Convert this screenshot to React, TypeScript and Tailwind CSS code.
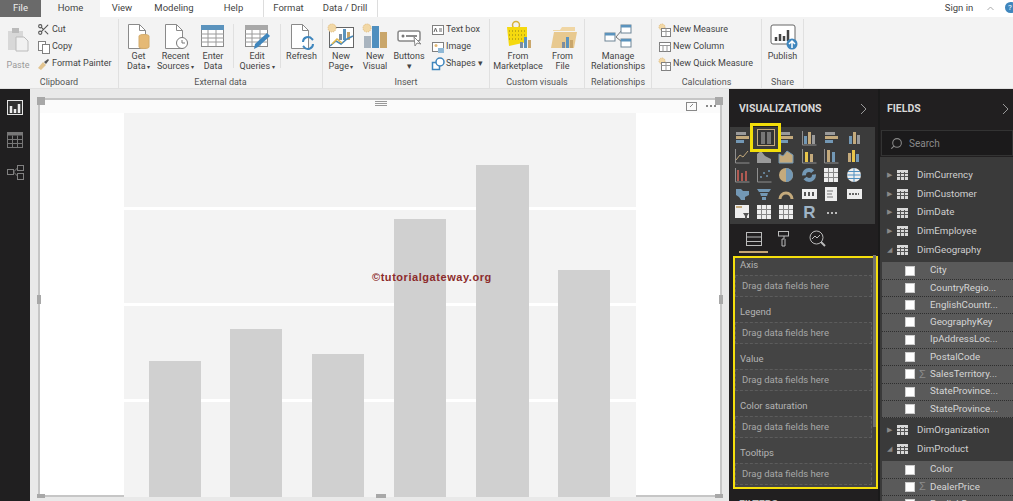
import type { ReactNode } from "react";
import { Scissors, Search } from "lucide-react";

const TABS = [
  { label: "View", w: "w-[44px]" },
  { label: "Modeling", w: "w-[60px]" },
  { label: "Help", w: "w-[59px]" },
];

function Doc({ children }: { children?: ReactNode }) {
  return (
    <svg width="32" height="30" viewBox="0 0 32 30" fill="none">
      <path d="M5.5 3.5h11l6 6v18h-17z" fill="#fff" stroke="#8a8a8a" />
      <path d="M16.5 3.5v6h6" stroke="#8a8a8a" />
      {children}
    </svg>
  );
}

function TableIcon({ pencil }: { pencil?: boolean }) {
  return (
    <svg width="32" height="30" viewBox="0 0 32 30" fill="none">
      <rect x="4.5" y="4.5" width="22" height="21" fill="#fff" stroke="#8a8a8a" />
      <rect x="4" y="4" width="23" height="5" fill={pencil ? "#a8a8a8" : "#5b93bd"} />
      {[13, 17, 21].map((y) => <path key={y} d={`M4 ${y}h23`} stroke="#9a9a9a" />)}
      {[11, 19].map((x) => <path key={x} d={`M${x} 9v16`} stroke="#9a9a9a" />)}
      {pencil && <path d="M13 28l1-5 12-11 3 3-12 11z" fill="#3f86bd" />}
    </svg>
  );
}

function Bars({ x, y }: { x: number; y: number }) {
  return (
    <g>
      <rect x={x} y={y + 6} width="3" height="6" fill="#7d8ea0" />
      <rect x={x + 4} y={y + 1} width="3" height="11" fill="#5b93bd" />
      <rect x={x + 8} y={y + 4} width="3" height="8" fill="#c9a66b" />
    </g>
  );
}

const LARGE: Record<string, ReactNode> = {
  getData: (
    <Doc>
      <path d="M16 15c0-2 10-2 10 0v11c0 2-10 2-10 0z" fill="#e5b975" stroke="#d4ac6c" />
    </Doc>
  ),
  recent: (
    <Doc>
      <circle cx="22" cy="22" r="5.5" fill="#fff" stroke="#777" />
      <path d="M22 19v3h3" stroke="#777" />
    </Doc>
  ),
  enter: <TableIcon />,
  edit: <TableIcon pencil />,
  refresh: (
    <Doc>
      <path d="M17 21a5 5 0 0 1 9-3l1 1" stroke="#3f86bd" strokeWidth="2" />
      <path d="M27 23a5 5 0 0 1-9 3l-1-1" stroke="#3f86bd" strokeWidth="2" />
    </Doc>
  ),
  newPage: (
    <svg width="32" height="30" viewBox="0 0 32 30" fill="none">
      <rect x="4.5" y="6.5" width="24" height="20" fill="#fff" stroke="#666" />
      <circle cx="7" cy="7" r="4" fill="#f2d8a6" stroke="#e0b878" strokeDasharray="1 1" />
      <Bars x={14} y={7} />
      <path d="M5 25l6-5 5 3 6-5 6-3" stroke="#4a89b8" strokeWidth="1.5" />
      <path d="M7 23l5-5 5 4" stroke="#e6b949" strokeWidth="1.5" />
    </svg>
  ),
  newVisual: (
    <svg width="32" height="30" viewBox="0 0 32 30" fill="none">
      <circle cx="8" cy="7" r="4" fill="#f2d8a6" stroke="#e0b878" strokeDasharray="1 1" />
      <rect x="5" y="15" width="7" height="12" fill="#a9b4bf" />
      <rect x="13" y="5" width="7" height="22" fill="#4f8fbf" />
      <rect x="21" y="11" width="7" height="16" fill="#c9a66b" />
    </svg>
  ),
  buttons: (
    <svg width="32" height="30" viewBox="0 0 32 30" fill="none">
      <rect x="5" y="10" width="22" height="10" rx="2" fill="#fff" stroke="#888" strokeWidth="1.5" />
      <circle cx="10" cy="15" r="1.5" fill="#777" />
      <path d="M13 15h11" stroke="#666" strokeWidth="1.5" />
      <path d="M21 16l1 9 2-3 4 1z" fill="#fff" stroke="#888" />
    </svg>
  ),
  market: (
    <svg width="32" height="34" viewBox="0 0 32 34" fill="none">
      <circle cx="14" cy="8" r="3.5" stroke="#d6b23a" strokeWidth="1.5" />
      <path d="M5 10h20v15l-18 4z" fill="#f5d90f" />
      <path d="M7 14h17M7 18h17M7 22h17" stroke="#8c7c18" strokeDasharray="1 2" />
      <Bars x={18} y={19} />
    </svg>
  ),
  file: (
    <svg width="32" height="30" viewBox="0 0 32 30" fill="none">
      <path d="M6 9h7l2-3h13v4H6z" fill="#f0d6a4" />
      <path d="M4 27l3-16h23l-3 16z" fill="#e8c98f" />
      <Bars x={15} y={15} />
    </svg>
  ),
  manage: (
    <svg width="32" height="30" viewBox="0 0 32 30" fill="none">
      <path d="M14 16l6-7M14 16l6 5" stroke="#777" />
      {[[3, 12], [19, 4], [19, 18]].map(([x, y]) => (
        <g key={x * y}>
          <rect x={x} y={y} width="10" height="8" fill="#fff" stroke="#6f8596" />
          <rect x={x} y={y} width="10" height="2.5" fill="#5b93bd" />
        </g>
      ))}
    </svg>
  ),
  publish: (
    <svg width="32" height="30" viewBox="0 0 32 30" fill="none">
      <rect x="4" y="4" width="24" height="19" rx="2" fill="#fff" stroke="#666" />
      <path d="M9 20v-4M13 20v-7M17 20v-5M21 20V9" stroke="#444" strokeWidth="2.5" />
      <circle cx="25" cy="23" r="5.5" fill="#3f86bd" />
      <path d="M25 27v-7M22 23l3-3 3 3" stroke="#fff" strokeWidth="1.5" />
    </svg>
  ),
};

function LargeButton({ icon, lines, w, caret }: { icon: string; lines: string[]; w: string; caret?: boolean }) {
  return (
    <div className={`${w} flex flex-col items-center shrink-0`}>
      <div className="h-[32px] flex items-end justify-center">{LARGE[icon]}</div>
      <div className="text-center leading-[10px]">
        {lines.map((l, i) => (
          <div key={l} className="whitespace-nowrap h-[10px]">
            {l}
            {caret && i === lines.length - 1 && <span className="text-[6px] align-middle"> ▾</span>}
          </div>
        ))}
      </div>
    </div>
  );
}

function SmallButton({ icon, label }: { icon: ReactNode; label: string }) {
  return (
    <div className="h-[17px] flex items-center gap-[1px] whitespace-nowrap">
      <div className="w-[15px] h-[15px] shrink-0 flex items-center justify-center">{icon}</div>
      {label}
    </div>
  );
}

function Group({ label, w, children }: { label: string; w: string; children: ReactNode }) {
  return (
    <div className={`${w} shrink-0 h-[69px] flex flex-col border-r border-[#e0e0e0]`}>
      <div className="h-[54px] flex">{children}</div>
      <div className="mt-[3px] text-center text-[#555] leading-[12px]">{label}</div>
    </div>
  );
}

const Box = ({ fill = "#fff" }: { fill?: string }) => (
  <svg width="14" height="14" viewBox="0 0 14 14" fill="none">
    <rect x="1.5" y="2.5" width="11" height="9" fill={fill} stroke="#808080" />
    <path d="M1.5 5.5h11M5 5.5v6M9 5.5v6" stroke="#999" />
  </svg>
);

const Measure = () => (
  <svg width="14" height="14" viewBox="0 0 14 14" fill="none">
    <circle cx="4" cy="4" r="3" fill="#f2d8a6" stroke="#e0b878" strokeDasharray="1 1" />
    <rect x="3.5" y="5.5" width="9" height="8" fill="#fff" stroke="#808080" />
    <path d="M3.5 8.5h9M8 5.5v8" stroke="#999" />
  </svg>
);

function Ribbon() {
  return (
    <div className="h-[71px] bg-[#f3f3f3] flex pt-[2px] text-[9px] text-[#444]">
      <Group label="Clipboard" w="w-[119px]">
        <div className="w-[36px] shrink-0 flex flex-col items-center text-[#999]">
          <svg className="mt-[8px]" width="24" height="25" viewBox="0 0 24 25" fill="none">
            <rect x="2" y="4" width="15" height="19" fill="#d8d8d8" />
            <rect x="6" y="1" width="7" height="5" fill="#bbb" />
            <path d="M10 10h8l4 4v10H10z" fill="#f1f1f1" stroke="#bbb" />
          </svg>
          <div className="mt-[7px]">Paste</div>
        </div>
        <div className="pt-[2px] flex flex-col">
          <SmallButton label="Cut" icon={<Scissors size={13} color="#555" />} />
          <SmallButton
            label="Copy"
            icon={
              <svg width="14" height="14" viewBox="0 0 14 14" fill="#fff" stroke="#808080">
                <rect x="1.5" y="1.5" width="7" height="9" />
                <rect x="5.5" y="4.5" width="7" height="9" />
              </svg>
            }
          />
          <SmallButton
            label="Format Painter"
            icon={
              <svg width="14" height="14" viewBox="0 0 14 14" fill="none">
                <path d="M1 11l5-6 3 3-5 5z" fill="#e2c48f" />
                <path d="M7 5l4-3 1 1-3 4z" fill="#555" />
              </svg>
            }
          />
        </div>
      </Group>
      <Group label="External data" w="w-[204px]">
        <div className="flex items-start pl-[1px]">
          <LargeButton icon="getData" lines={["Get", "Data"]} w="w-[37px]" caret />
          <LargeButton icon="recent" lines={["Recent", "Sources"]} w="w-[37px]" caret />
          <LargeButton icon="enter" lines={["Enter", "Data"]} w="w-[38px]" />
          <div className="w-px h-[44px] mt-[5px] ml-[1px] bg-[#e0e0e0]" />
          <LargeButton icon="edit" lines={["Edit", "Queries"]} w="w-[46px]" caret />
          <div className="w-px h-[44px] mt-[5px] bg-[#e0e0e0]" />
          <LargeButton icon="refresh" lines={["Refresh"]} w="w-[41px]" />
        </div>
      </Group>
      <Group label="Insert" w="w-[167px]">
        <LargeButton icon="newPage" lines={["New", "Page"]} w="w-[36px]" caret />
        <LargeButton icon="newVisual" lines={["New", "Visual"]} w="w-[32px]" />
        <LargeButton icon="buttons" lines={["Buttons", "▾"]} w="w-[36px]" />
        <div className="pt-[2px] pl-[3px] flex flex-col">
          <SmallButton
            label="Text box"
            icon={
              <svg width="14" height="14" viewBox="0 0 14 14" fill="none">
                <rect x="1.5" y="2.5" width="11" height="9" fill="#fff" stroke="#808080" />
                <path d="M3 9l1.5-4L6 9M8 6h3M8 8h3" stroke="#666" />
              </svg>
            }
          />
          <SmallButton
            label="Image"
            icon={
              <svg width="14" height="14" viewBox="0 0 14 14" fill="none">
                <rect x="1.5" y="2.5" width="11" height="9" fill="#fff" stroke="#808080" />
                <circle cx="5" cy="5.5" r="1.5" fill="#e5b975" />
                <path d="M7 13h6v-5H7z" fill="#8fb8d6" />
              </svg>
            }
          />
          <SmallButton
            label="Shapes ▾"
            icon={
              <svg width="14" height="14" viewBox="0 0 14 14" fill="none">
                <rect x="1.5" y="5.5" width="7" height="7" fill="#fff" stroke="#3f86bd" strokeWidth="1.5" />
                <circle cx="9" cy="5" r="4" fill="#fff" stroke="#3f86bd" strokeWidth="1.5" />
              </svg>
            }
          />
        </div>
      </Group>
      <Group label="Custom visuals" w="w-[95px]">
        <LargeButton icon="market" lines={["From", "Marketplace"]} w="w-[56px]" />
        <LargeButton icon="file" lines={["From", "File"]} w="w-[33px]" />
      </Group>
      <Group label="Relationships" w="w-[67px]">
        <LargeButton icon="manage" lines={["Manage", "Relationships"]} w="w-[66px]" />
      </Group>
      <Group label="Calculations" w="w-[110px]">
        <div className="pt-[2px] pl-[5px] flex flex-col">
          <SmallButton label="New Measure" icon={<Measure />} />
          <SmallButton label="New Column" icon={<Box />} />
          <SmallButton label="New Quick Measure" icon={<Measure />} />
        </div>
      </Group>
      <Group label="Share" w="w-[42px]">
        <LargeButton icon="publish" lines={["Publish"]} w="w-[41px]" />
      </Group>
    </div>
  );
}

function TopTabs() {
  return (
    <div className="h-[17px] bg-white flex items-stretch text-[9.5px] text-[#444] leading-[16px]">
      <div className="w-[41px] bg-[#6a6a6a] text-[#eee] text-center">File</div>
      <div className="w-[59px] bg-[#f3f3f3] text-center">Home</div>
      {TABS.map((t) => (
        <div key={t.label} className={`${t.w} text-center`}>{t.label}</div>
      ))}
      <div className="w-[50px] border-l border-[#ddd] text-center">Format</div>
      <div className="w-[65px] border-r border-[#ddd] text-center">Data / Drill</div>
      <div className="flex-1" />
      <div className="w-[34px] text-center">Sign in</div>
      <div className="w-[29px] flex items-center justify-center">
        <svg width="7" height="5" viewBox="0 0 7 5" fill="none"><path d="M.5 4l3-3 3 3" stroke="#aaa" /></svg>
      </div>
      <div className="w-[12px] h-[11px] mt-[2px] mr-[-4px] rounded-full bg-[#3f86bd] text-white text-[8px] leading-[11px] pl-[3px]">?</div>
    </div>
  );
}

function Sidebar() {
  return (
    <div className="w-[30px] shrink-0 bg-[#201f20] flex flex-col items-center pt-[11px] gap-[16px]">
      <svg width="16" height="16" viewBox="0 0 16 16" fill="none">
        <rect x=".5" y=".5" width="15" height="14" fill="#333" stroke="#e6e6e6" />
        <path d="M4 13V6M8 13V9M12 13V4" stroke="#eee" strokeWidth="2.5" />
      </svg>
      <svg width="16" height="16" viewBox="0 0 16 16" fill="none">
        <rect x=".5" y=".5" width="15" height="15" stroke="#777" />
        <rect x=".5" y=".5" width="15" height="3" fill="#777" />
        <path d="M.5 7.5h15M.5 11.5h15M5.5 3.5v12M10.5 3.5v12" stroke="#777" />
      </svg>
      <svg width="17" height="16" viewBox="0 0 17 16" fill="none" stroke="#808080">
        <rect x=".5" y="5.5" width="6" height="5" />
        <rect x="10.5" y="1.5" width="6" height="5" />
        <rect x="10.5" y="9.5" width="6" height="6" />
        <path d="M6.5 8l4-4M6.5 8l4 4" />
      </svg>
    </div>
  );
}

const BARS = [
  { x: 25, w: 52, top: 248 },
  { x: 106, w: 52, top: 216 },
  { x: 188, w: 52, top: 241 },
  { x: 270, w: 52, top: 106 },
  { x: 352, w: 53, top: 52 },
  { x: 434, w: 52, top: 157 },
];

function Handle({ className }: { className: string }) {
  return <div className={`absolute bg-[#a8a8a8] ${className}`} />;
}

function Canvas() {
  return (
    <div className="w-[699px] shrink-0 bg-[#e9e9e9] pl-[8px] pr-[7px] pt-[9px]">
      <div className="relative h-[399px] bg-white border-2 border-[#c6c6c6]">
        <div className="h-[13px] bg-[#fbfbfb]" />
        <div className="ml-[84px] w-[512px]">
          <svg width="512" height="384" viewBox="0 0 512 384" className="block">
            <rect width="512" height="384" fill="#f3f3f3" />
            {[94, 190, 286].map((y) => <rect key={y} x="0" y={y} width="512" height="3" fill="#fff" />)}
            {BARS.map((b) => <rect key={b.x} x={b.x} y={b.top} width={b.w} height={384 - b.top} fill="#d0d0d0" />)}
          </svg>
        </div>
        <div className="absolute left-[332px] top-[169px] text-[11px] font-bold text-[#8c2b2b] font-['Liberation_Sans',sans-serif] tracking-[0.55px]">
          ©tutorialgateway.org
        </div>
        <div className="absolute left-[335px] top-[0px] w-[12px] flex flex-col gap-[1px] pt-[1px]">
          {[0, 1, 2].map((i) => <div key={i} className="h-px bg-[#999]" />)}
        </div>
        <svg className="absolute left-[646px] top-[2px]" width="11" height="9" viewBox="0 0 11 9" fill="none" stroke="#888">
          <rect x=".5" y=".5" width="10" height="8" />
          <path d="M4 5l3-3" />
        </svg>
        <div className="absolute left-[666px] top-[5px] flex gap-[2px]">
          {[0, 1, 2].map((i) => <div key={i} className="w-[2px] h-[2px] bg-[#888]" />)}
        </div>
        <Handle className="left-[-3px] top-[-3px] w-[8px] h-[8px]" />
        <Handle className="right-[-3px] top-[-3px] w-[8px] h-[8px]" />
        <Handle className="left-[-3px] top-[195px] w-[4px] h-[9px]" />
        <Handle className="right-[-3px] top-[195px] w-[4px] h-[9px]" />
        <Handle className="left-[336px] bottom-[-3px] w-[10px] h-[4px]" />
        <Handle className="left-[-3px] bottom-[-3px] w-[8px] h-[4px]" />
        <Handle className="right-[-3px] bottom-[-3px] w-[8px] h-[4px]" />
      </div>
    </div>
  );
}

// visualisation gallery, one entry per cell
const GOLD = "#c4aa7c";
const BLUE = "#7398b5";
const GREY = "#9a9a9a";

function VizIcon({ n }: { n: number }) {
  const frame = <path d="M1.5 1v14h14" stroke="#8f8f8f" />;
  const vbars = (
    <g>
      <rect x="3" y="6" width="3" height="8" fill={BLUE} />
      <rect x="7" y="2" width="3" height="12" fill={GOLD} />
      <rect x="11" y="5" width="3" height="9" fill={GREY} />
    </g>
  );
  const hbars = (
    <g>
      <rect x="2" y="2" width="10" height="3" fill={GREY} />
      <rect x="2" y="6" width="13" height="3" fill={GOLD} />
      <rect x="2" y="10" width="8" height="3" fill={BLUE} />
    </g>
  );
  const table = (
    <g>
      <rect x="1" y="1" width="14" height="14" fill="#eee" />
      <path d="M1 5.5h14M1 10.5h14M5.5 1v14M10.5 1v14" stroke="#888" />
    </g>
  );
  const card = (
    <g>
      <rect x="1" y="3" width="15" height="10" fill="#eee" />
      <path d="M3 8h10" stroke="#666" strokeWidth="2" strokeDasharray="2 1" />
    </g>
  );
  const kinds: ReactNode[] = [
    hbars, null, hbars, <>{frame}{vbars}</>, hbars, vbars,
    <>{frame}<path d="M2 12l4-5 3 2 5-6" stroke={GOLD} /></>,
    <path d="M1 15V6l4-3 4 5 6 3v4z" fill={GREY} />,
    <path d="M1 15V6l4 2 4-5 6 4v8z" fill={GOLD} stroke={BLUE} />,
    <>{frame}<rect x="4" y="4" width="3" height="10" fill="#e8c54a" /><rect x="9" y="6" width="3" height="8" fill={GOLD} /></>,
    <>{frame}<rect x="4" y="2" width="3" height="12" fill={GOLD} /><rect x="9" y="4" width="3" height="10" fill={BLUE} /></>,
    <><rect x="2" y="5" width="3" height="9" fill={GOLD} /><rect x="6" y="2" width="3" height="12" fill="#e8c54a" /><rect x="10" y="6" width="3" height="8" fill={BLUE} /></>,
    <>{frame}<path d="M4 14V3M8 14V6M12 14V4" stroke="#b05a52" strokeWidth="2" /></>,
    <>{frame}<g fill={BLUE}><circle cx="5" cy="10" r="1" /><circle cx="8" cy="6" r="1" /><circle cx="11" cy="9" r="1" /><circle cx="13" cy="4" r="1" /></g></>,
    <><circle cx="8" cy="8" r="7" fill={GOLD} /><path d="M8 8V1a7 7 0 0 1 0 14z" fill={BLUE} /></>,
    <circle cx="8" cy="8" r="5" fill="none" stroke={BLUE} strokeWidth="4" strokeDasharray="12 3" />,
    table,
    <><circle cx="8" cy="8" r="7" fill="#eee" /><path d="M1 8h14M8 1v14M2 4.5h12M2 11.5h12" stroke="#4f8fbf" /></>,
    <path d="M2 3h5l2 2h6v4l-4 2v3H7l-2-3-3-2z" fill={BLUE} />,
    <path d="M1 3h14l-2 3H3zM4 7h8l-1 3H5zM6 11h4v3H6z" fill={BLUE} />,
    <path d="M2 13a6 6 0 0 1 12 0" fill="none" stroke={GOLD} strokeWidth="3" />,
    <><rect x="1" y="3" width="15" height="10" fill="#eee" /><rect x="3" y="6" width="2" height="4" fill="#555" /><rect x="7" y="6" width="2" height="4" fill="#555" /><rect x="11" y="6" width="2" height="4" fill="#555" /></>,
    <><rect x="2" y="1" width="12" height="14" fill="#eee" /><path d="M4 5h6M4 8h5M4 11h6" stroke="#777" /></>,
    card,
    <><rect x="1" y="1" width="14" height="13" fill="#eee" /><rect x="2" y="2" width="6" height="2" fill={GOLD} /><path d="M9 9h6l-2 3v3h-2v-3z" fill="#555" /></>,
    table,
    table,
    null,
    null,
  ];
  if (n === 1) return <div className="w-[17px] h-[17px]" />;
  if (n === 27) return <div className="w-[17px] h-[17px] text-[17px] leading-[17px] font-bold text-[#9fb4c6] text-center font-['Liberation_Sans',sans-serif]">R</div>;
  if (n === 28) return <div className="w-[17px] h-[17px] flex items-center justify-center gap-[2px]">{[0, 1, 2].map((i) => <div key={i} className="w-[2px] h-[2px] bg-[#bbb]" />)}</div>;
  return (
    <svg width="17" height="17" viewBox="0 0 17 17" fill="none">{kinds[n]}</svg>
  );
}

const WELLS = ["Axis", "Legend", "Value", "Color saturation", "Tooltips"];

function VizPanel() {
  return (
    <div className="w-[149px] shrink-0 bg-[#211f20] overflow-hidden relative">
      <div className="h-[38px] pl-[10px] pr-[10px] pt-[2px] flex items-center justify-between text-[10.5px] font-bold text-[#d8d8d8]">
        VISUALIZATIONS
        <svg width="8" height="12" viewBox="0 0 8 12" fill="none"><path d="M1 1l5 5-5 5" stroke="#999" /></svg>
      </div>
      <div className="h-[97px] ml-[1px] w-[145px] bg-[#3b3b3b] grid grid-cols-[repeat(6,22.4px)] auto-rows-[18.6px] pl-[1px] pt-[2px]">
        {Array.from({ length: 29 }, (_, i) => (
          <div key={i} className="flex items-center justify-center"><VizIcon n={i} /></div>
        ))}
      </div>
      <div className="absolute left-[21px] top-[34px] w-[31px] h-[29px] border-[3px] border-[#f2de0a] flex items-center justify-center">
        <svg width="18" height="17" viewBox="0 0 18 17" fill="none">
          <rect x=".5" y=".5" width="17" height="16" fill="#333" stroke={GOLD} />
          <rect x="4" y="3" width="4" height="12" fill="#777" />
          <rect x="10" y="3" width="4" height="12" fill="#777" />
        </svg>
      </div>
      <div className="h-[27px] flex items-center pl-[17px] pt-[2px]">
        <svg width="16" height="16" viewBox="0 0 16 16" fill="none" stroke="#bbb">
          <rect x=".5" y="1.5" width="15" height="13" />
          <path d="M.5 6h15M.5 10.5h15" />
        </svg>
        <svg className="ml-[16px]" width="11" height="16" viewBox="0 0 11 16" fill="none" stroke="#bbb">
          <rect x=".5" y=".5" width="10" height="4.5" />
          <path d="M6 5v3H4v7h3V8" />
        </svg>
        <svg className="ml-[20px]" width="17" height="17" viewBox="0 0 17 17" fill="none" stroke="#bbb">
          <circle cx="7.5" cy="7.5" r="6.5" />
          <path d="M12 12l4 4" strokeWidth="2" />
          <path d="M3 9l3-3 2 2 3-3" />
        </svg>
      </div>
      <div className="ml-[10px] w-[29px] h-[2px] bg-[#c4a574]" />
      <div className="relative h-[233px] w-[145px] bg-[#444] ml-[4px] mt-[3px] border-2 border-[#f5df0c] pt-[1px] text-[9.5px] text-[#b4b4b4]">
        {WELLS.map((w) => (
          <div key={w} className="h-[47px]">
            <div className="h-[16px] pl-[5px] leading-[12px]">{w}</div>
            <div className="mr-[4px] h-[22px] border border-dashed border-[#5c5c5c] bg-[#474747] pl-[6px] leading-[20px] text-[#a8a8a8]">
              Drag data fields here
            </div>
          </div>
        ))}
        <div className="absolute right-[0px] top-[-3px] w-[3px] h-[172px] bg-[#707070]" />
      </div>
      <div className="pl-[10px] pt-[8px] text-[10.5px] font-bold text-[#bbb]">FILTERS</div>
    </div>
  );
}

type Row = { kind: "table" | "field"; label: string; open?: boolean; sigma?: boolean; gap?: boolean };

const ROWS: Row[] = [
  { kind: "table", label: "DimCurrency" },
  { kind: "table", label: "DimCustomer" },
  { kind: "table", label: "DimDate" },
  { kind: "table", label: "DimEmployee" },
  { kind: "table", label: "DimGeography", open: true },
  { kind: "field", label: "City", gap: true },
  { kind: "field", label: "CountryRegio..." },
  { kind: "field", label: "EnglishCountr..." },
  { kind: "field", label: "GeographyKey" },
  { kind: "field", label: "IpAddressLoc..." },
  { kind: "field", label: "PostalCode" },
  { kind: "field", label: "SalesTerritory...", sigma: true },
  { kind: "field", label: "StateProvince..." },
  { kind: "field", label: "StateProvince..." },
  { kind: "table", label: "DimOrganization", gap: true },
  { kind: "table", label: "DimProduct", open: true },
  { kind: "field", label: "Color", gap: true },
  { kind: "field", label: "DealerPrice", sigma: true },
  { kind: "field", label: "EnglishDescr..." },
];

function FieldRow({ row }: { row: Row }) {
  const top = row.gap ? "mt-[3px]" : "";
  if (row.kind === "table") {
    return (
      <div className={`h-[18.7px] shrink-0 flex items-center text-[#d0d0d0] ${top}`}>
        <div className="w-[17px] pl-[7px] text-[7px] text-[#888] leading-none">{row.open ? "◢" : "▶"}</div>
        <svg width="11" height="10" viewBox="0 0 11 10" fill="none" className="mr-[9px]">
          <rect width="11" height="10" fill="#d9d9d9" />
          <path d="M0 3.5h11M0 6.5h11M3.5 2v8M7.5 2v8" stroke="#555" />
        </svg>
        {row.label}
      </div>
    );
  }
  return (
    <div className={`h-[17.3px] shrink-0 ml-[2px] bg-[#5a5a5a] border-b border-dotted border-[#2e2e2e] flex items-center text-[#d6d6d6] ${top}`}>
      <div className="ml-[23px] w-[8px] h-[8px] bg-white box-content border border-[#ccc]" />
      <div className="w-[15px] text-center text-[11px] leading-none text-[#8c8c8c] font-['Liberation_Sans',sans-serif]">{row.sigma ? "Σ" : ""}</div>
      <div className="whitespace-nowrap">{row.label}</div>
    </div>
  );
}

function FieldsPanel() {
  return (
    <div className="w-[135px] shrink-0 bg-[#211f20] overflow-hidden border-l-2 border-[#1a1a1a]">
      <div className="h-[38px] pl-[7px] pr-[3px] pt-[2px] flex items-center justify-between text-[10.5px] font-bold text-[#d8d8d8]">
        FIELDS
        <svg width="8" height="12" viewBox="0 0 8 12" fill="none"><path d="M1 1l5 5-5 5" stroke="#999" /></svg>
      </div>
      <div className="h-[26px] ml-[1px] mt-[3px] bg-[#1b1a1b] border border-[#333] flex items-center pl-[8px] gap-[6px] text-[10px] text-[#8a8a8a]">
        <Search size={13} color="#888" className="-scale-x-100" />
        Search
      </div>
      <div className="mt-[1px] h-[344px] bg-[#3a3a3a] flex flex-col pt-[9px] text-[9.75px] overflow-hidden">
        {ROWS.map((r, i) => <FieldRow key={i} row={r} />)}
      </div>
    </div>
  );
}

export default function App() {
  return (
    <div className="w-[1013px] h-[501px] overflow-hidden flex flex-col bg-[#e9e9e9] font-['Roboto','Noto_Sans',sans-serif]">
      <TopTabs />
      <Ribbon />
      <div className="h-[1px] bg-[#e0e0e0]" />
      <div className="flex-1 flex min-h-0">
        <Sidebar />
        <Canvas />
        <VizPanel />
        <FieldsPanel />
      </div>
    </div>
  );
}
